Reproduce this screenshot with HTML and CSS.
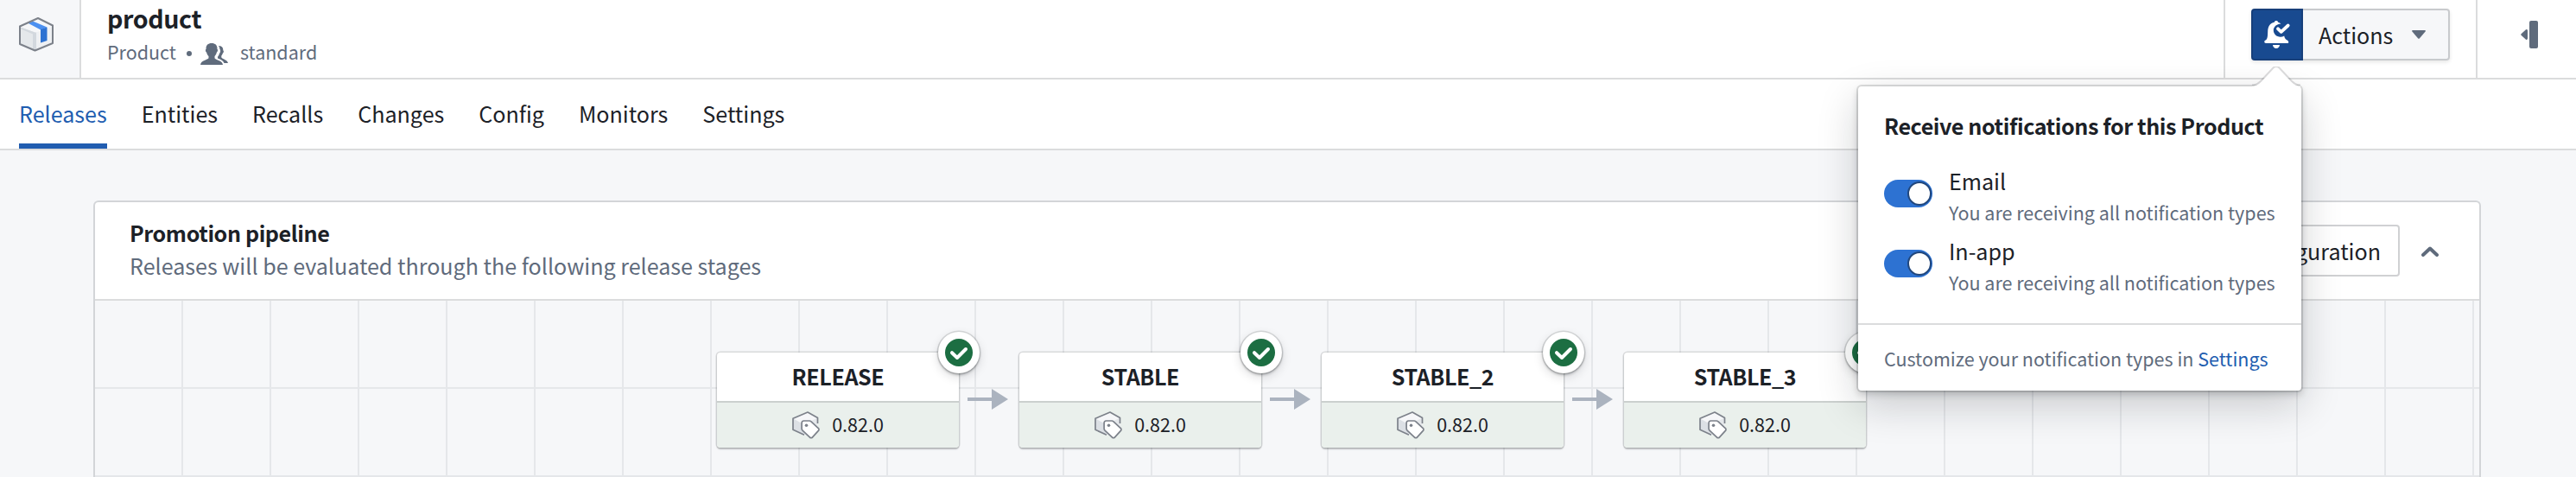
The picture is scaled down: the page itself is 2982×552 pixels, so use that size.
FILE: index.html
```html
<!DOCTYPE html>
<html lang="en">
<head>
    <meta charset="UTF-8">
    <meta name="viewport" content="width=device-width, initial-scale=1.0">
    <title>product</title>
    <link rel="stylesheet" href="styles.css">
</head>
<body>
    <svg class="sprite" width="0" height="0">
        <symbol id="tick" viewBox="0 0 32 32">
            <circle cx="16" cy="16" r="16" fill="#1c6e42"/>
            <path d="M8 16.200l6 5.800L24 12" fill="none" stroke="#fff" stroke-width="4" stroke-linecap="round" stroke-linejoin="round"/>
        </symbol>
        <symbol id="release" viewBox="0 0 32 32">
            <path d="M1 8.300L18 1l11.500 6.500V20L14 27.500 1 21.500z" fill="#f6f7f9"/>
            <path d="M1 8.300l12.500 7V27L1 21.500z" fill="#dce0e5"/>
            <path d="M13.500 15.300l16-7.800V20l-16 7z" fill="#e5e8eb"/>
            <path d="M14 27.200L1 21.300V8.300L18 1l11.500 6.500V14" fill="none" stroke="#7c818a" stroke-width="1.700" stroke-linejoin="round"/>
            <path d="M13.500 11h6.500a3 3 0 0 1 2 .8l8.300 7.700a2 2 0 0 1 .1 2.900l-7 7.700a2 2 0 0 1-2.900 0l-8.500-8a3 3 0 0 1-.900-2.100v-6.500A2.500 2.500 0 0 1 13.500 11z" fill="#fff" stroke="#7c818a" stroke-width="1.700"/>
            <circle cx="16.500" cy="16.200" r="1.800" fill="#7c818a"/>
        </symbol>
        <symbol id="arrow" viewBox="0 0 48 24">
            <path d="M0 10h28V0l19 12-19 12V14H0z" fill="#abb3bf"/>
        </symbol>
    </svg>

    <header class="header">
        <div class="header-icon">
            <svg width="40" height="40" viewBox="0 0 40 40">
                <path d="M1 10.500L22 1l17 8.500V30L18.500 38.500 1 31z" fill="#f6f7f9"/>
                <path d="M2 11.500l16.500 6V38L2 31z" fill="#e5e8eb"/>
                <path d="M2 11.500l16.500 6v3L2 13.500zM16 17.500h4.500V38H16z" fill="#d3d8de"/>
                <path d="M20 17.500L38 11v18.500L20 37.500z" fill="#eef0f3"/>
                <path d="M10.500 6.800L16 4.500l16.500 7-7.500 3z" fill="#4c90f0"/>
                <path d="M25 14l7.500-2.500V27L25 29.500z" fill="#2d72d2"/>
                <path d="M1 10.500L22 1l17 8.500V30L18.500 38.500 1 31z" fill="none" stroke="#7c818a" stroke-width="2" stroke-linejoin="round"/>
            </svg>
        </div>
        <div class="header-text">
            <h1>product</h1>
            <div class="meta">
                <span>Product</span>
                <span class="dot"></span>
                <svg width="32" height="26" viewBox="0 0 32 26">
                    <path d="M13 0c4.500 0 6.800 2.600 6.400 6.700 1 .4.800 3-.6 4-.5 2-1.300 3.400-2.300 4.300v2.300c.8 2 8.500 2.500 9.500 7.700H0c.6-5.200 8.500-5.700 9.500-7.700V15c-1-1-1.900-2.300-2.300-4.300-1.400-.8-1.700-3.500-.6-4C6.200 2.600 8.500 0 13 0z" fill="#5f6b7c"/>
                    <path d="M21 3c3.700-.2 5.600 2.300 5.200 5.300 1.300.6.700 2.700-.3 3.300-.4 1.500-1 2.400-1.600 3v1.800c.8 1.600 7 2.600 7.700 6.600h-4.500c-1.500-3.500-5-4.500-7.500-5.500v-1.800c1-1 1.600-2.300 2-3.800 1.500-1.600 1.500-4 .3-5.400.1-1.300-.4-2.500-1.300-3.500z" fill="#5f6b7c"/>
                </svg>
                <span class="space-name">standard</span>
            </div>
        </div>
        <div class="header-actions">
            <div class="button-group">
                <button class="bell-btn">
                    <svg width="34" height="32" viewBox="0 0 34 32">
                        <path d="M16 0c1.200 0 2 .6 2.200 1.700 1.300.3 2.400.9 3.300 1.800-5 .5-8.700 3.300-8.700 7.500 0 4.300 3.600 7.700 8 7.700 1.600 0 3-.4 4.400-1.200.3 1.800 1 3.300 2.500 4.500 2.300 1 3 2 2.300 4H4c-2 0-2.200-2.500-.8-3.200C6 21.300 6 18.500 6.200 12.500c.1-6 2.600-9.900 7.600-10.800C14 .6 14.800 0 16 0zM12 28h8c0 2.300-1.800 4-4 4s-4-1.700-4-4z" fill="#fff"/>
                        <path d="M18 9.300l3.700 3.500 8-7.300" fill="none" stroke="#fff" stroke-width="3.800" stroke-linecap="round" stroke-linejoin="round"/>
                    </svg>
                </button>
                <button class="actions-btn">
                    Actions
                    <svg width="16" height="10" viewBox="0 0 16 10"><path d="M1 0h14q1.500.3.600 1.600L9 9.300q-1 1-2 0L.4 1.600Q-.5.300 1 0z" fill="#5f6b7c"/></svg>
                </button>
            </div>
        </div>
        <div class="header-collapse">
            <svg width="20" height="32" viewBox="0 0 20 32">
                <rect x="10" width="10" height="32" rx="2" fill="#5f6b7c"/>
                <path d="M8 11.500v9q-.3 2-2 1.200L.8 17q-1.200-1 0-2L6 10.300q1.700-.8 2 1.200z" fill="#5f6b7c"/>
            </svg>
        </div>
    </header>

    <nav class="tabs">
        <a class="tab active">Releases</a>
        <a class="tab">Entities</a>
        <a class="tab">Recalls</a>
        <a class="tab">Changes</a>
        <a class="tab">Config</a>
        <a class="tab">Monitors</a>
        <a class="tab">Settings</a>
    </nav>

    <main class="card">
        <div class="card-header">
            <div class="card-text">
                <h2>Promotion pipeline</h2>
                <p>Releases will be evaluated through the following release stages</p>
            </div>
            <button class="config-btn">Configuration</button>
            <svg class="chevron" width="20" height="12" viewBox="0 0 20 12">
                <path d="M2 10l8-7.500L18 10" fill="none" stroke="#5f6b7c" stroke-width="4" stroke-linecap="round" stroke-linejoin="round"/>
            </svg>
        </div>
        <div class="canvas">
            <div class="stage">
                <h3>RELEASE</h3>
                <div class="version"><svg width="32" height="32"><use href="#release"/></svg><span>0.82.0</span></div>
                <div class="badge"><svg width="32" height="32"><use href="#tick"/></svg></div>
            </div>
            <svg class="arrow" width="48" height="24"><use href="#arrow"/></svg>
            <div class="stage">
                <h3>STABLE</h3>
                <div class="version"><svg width="32" height="32"><use href="#release"/></svg><span>0.82.0</span></div>
                <div class="badge"><svg width="32" height="32"><use href="#tick"/></svg></div>
            </div>
            <svg class="arrow" width="48" height="24"><use href="#arrow"/></svg>
            <div class="stage">
                <h3>STABLE_2</h3>
                <div class="version"><svg width="32" height="32"><use href="#release"/></svg><span>0.82.0</span></div>
                <div class="badge"><svg width="32" height="32"><use href="#tick"/></svg></div>
            </div>
            <svg class="arrow" width="48" height="24"><use href="#arrow"/></svg>
            <div class="stage">
                <h3>STABLE_3</h3>
                <div class="version"><svg width="32" height="32"><use href="#release"/></svg><span>0.82.0</span></div>
                <div class="badge"><svg width="32" height="32"><use href="#tick"/></svg></div>
            </div>
        </div>
    </main>

    <div class="popover">
        <svg class="popover-arrow" width="56" height="24" viewBox="0 0 56 24">
            <path d="M0 24v-1.500c5 0 7-1.500 10-4.500L24.500 2.500q3.500-3.500 7 0L46 18c3 3 5 4.500 10 4.500V24z" fill="#fff"/>
            <path d="M0 21.500c5 0 7-1.500 10-4.500L24.500 1.500q3.500-3 7 0L46 17c3 3 5 4.500 10 4.500" fill="none" stroke="#111418" stroke-opacity=".15" stroke-width="2"/>
        </svg>
        <div class="popover-body">
            <h4>Receive notifications for this Product</h4>
            <div class="option">
                <span class="toggle"></span>
                <div>
                    <div class="option-name">Email</div>
                    <div class="option-note">You are receiving all notification types</div>
                </div>
            </div>
            <div class="option">
                <span class="toggle"></span>
                <div>
                    <div class="option-name">In-app</div>
                    <div class="option-note">You are receiving all notification types</div>
                </div>
            </div>
        </div>
        <div class="popover-footer">Customize your notification types in <a>Settings</a></div>
    </div>
</body>
</html>
```
FILE: styles.css
```css
* {
    margin: 0;
    padding: 0;
    box-sizing: border-box;
}

body {
    position: relative;
    height: 552px;
    overflow: hidden;
    background: #f6f7f9;
    color: #1c2127;
    font-family: "Noto Sans CJK SC", "Noto Sans CJK JP", "Open Sans", sans-serif;
    font-size: 25.08px;
}

svg {
    display: block;
    flex-shrink: 0;
}

.sprite {
    position: absolute;
}

button {
    font: inherit;
    color: inherit;
    border: none;
    cursor: pointer;
}

h1, h2, h3, h4 {
    font-size: 25.08px;
    font-weight: 700;
    letter-spacing: -0.4px;
}

/* header */
.header {
    display: flex;
    height: 92px;
    background: #fff;
    border-bottom: 2px solid #dbdcdd;
}

.header-icon {
    width: 94px;
    padding: 20px 0 0 22px;
    background: #f6f7f9;
    border-right: 2px solid #dbdcdd;
}

.header-text {
    flex: 1;
    padding-left: 30px;
}

h1 {
    font-size: 28.6px;
    line-height: 41px;
}

.meta {
    display: flex;
    align-items: center;
    color: #5f6b7c;
    font-size: 21.5px;
    line-height: 38px;
}

.dot {
    width: 6px;
    height: 6px;
    margin: 4px 10px 0 12px;
    border-radius: 50%;
    background: #5f6b7c;
}

.meta svg {
    margin-top: 5px;
}

.space-name {
    margin-left: 14px;
}

.header-actions {
    width: 294px;
    padding: 10px 30px;
    border-left: 2px solid #dbdcdd;
    border-right: 2px solid #dbdcdd;
}

.button-group {
    display: flex;
    height: 60px;
    border-radius: 4px;
    box-shadow: 0 2px 4px rgba(17, 20, 24, 0.1);
}

.bell-btn {
    display: flex;
    align-items: center;
    justify-content: center;
    width: 60px;
    background: #184a90;
    border: 2px solid #173f7a;
    border-radius: 4px 0 0 4px;
}

.actions-btn {
    display: flex;
    flex: 1;
    align-items: center;
    justify-content: space-between;
    padding: 0 26px 0 18px;
    line-height: 54px;
    background: #f6f7f9;
    border: 2px solid #c8cacd;
    border-left: none;
    border-radius: 0 4px 4px 0;
}

.header-collapse {
    width: 114px;
    padding: 24px 0 0 50px;
}

/* tabs */
.tabs {
    display: flex;
    gap: 40px;
    height: 82px;
    padding-left: 22px;
    background: #fff;
    border-bottom: 2px solid #dbdcdd;
}

.tab {
    height: 80px;
    line-height: 78px;
}

.tab.active {
    color: #215db0;
    box-shadow: inset 0 -6px #215db0;
}

/* promotion pipeline */
.card {
    margin: 58px 110px 0 108px;
    background: #fff;
    border: 2px solid #d3d5d8;
    border-bottom: none;
    border-radius: 6px 6px 0 0;
}

.card-header {
    display: flex;
    align-items: center;
    height: 114px;
    padding: 0 47px 0 40px;
    border-bottom: 2px solid #dbdcdd;
}

.card-text {
    flex: 1;
    margin-top: -4px;
    line-height: 38px;
}

.card-text p {
    color: #5f6b7c;
}

.config-btn {
    height: 60px;
    padding: 0 20px;
    line-height: 54px;
    background: #fff;
    border: 2px solid #d0d1d3;
    border-radius: 4px;
}

.chevron {
    margin: 2px 0 0 25px;
}

.canvas {
    display: flex;
    align-items: flex-start;
    height: 204px;
    padding: 60px 0 0 720px;
    background:
        repeating-linear-gradient(90deg, transparent 0 100px, #e5e7ea 100px 102px),
        repeating-linear-gradient(180deg, transparent 0 100px, #e5e7ea 100px 102px),
        #f6f7f9;
}

.stage {
    position: relative;
    width: 280px;
    height: 110px;
    border-radius: 4px;
    background: #fff;
    box-shadow: 0 0 0 1.5px rgba(17, 20, 24, 0.13), 0 2px 2px rgba(17, 20, 24, 0.2);
}

h3 {
    height: 58px;
    line-height: 54px;
    text-align: center;
    border-bottom: 2px solid #cbd0ce;
}

.version {
    display: flex;
    align-items: center;
    justify-content: center;
    gap: 14px;
    height: 52px;
    font-size: 21.5px;
    background: #eaf0ec;
    border-radius: 0 0 4px 4px;
}

.version span {
    margin-top: -3px;
    line-height: 30px;
}

.badge {
    position: absolute;
    top: -24px;
    right: -24px;
    width: 48px;
    height: 48px;
    padding: 8px;
    border-radius: 50%;
    background: #fff;
    box-shadow: 0 0 0 1.5px rgba(17, 20, 24, 0.13), 0 2px 3px rgba(17, 20, 24, 0.25), 0 4px 12px rgba(17, 20, 24, 0.15);
}

.arrow {
    margin: 42px 12px 0 10px;
}

/* notification popover */
.popover {
    position: absolute;
    top: 100px;
    left: 2151px;
    width: 513px;
    background: #fff;
    border-radius: 4px;
    box-shadow: 0 0 0 2px rgba(17, 20, 24, 0.13), 0 4px 8px rgba(17, 20, 24, 0.2), 0 16px 48px rgba(17, 20, 24, 0.2);
}

.popover-arrow {
    position: absolute;
    top: -23px;
    right: 1px;
}

.popover-body {
    padding: 30px 30px 29px;
    border-bottom: 2px solid #dbdcdd;
}

h4 {
    margin-bottom: 30px;
    line-height: 30px;
    white-space: nowrap;
}

.option {
    display: flex;
    gap: 19px;
}

.option + .option {
    margin-top: 7px;
}

.toggle {
    flex-shrink: 0;
    width: 56px;
    height: 32px;
    margin-top: 18px;
    padding: 2px 1px 2px 27px;
    border-radius: 16px;
    background: #2d72d2;
}

.toggle::before {
    content: "";
    display: block;
    width: 24px;
    height: 24px;
    border: 2px solid #21477d;
    border-radius: 50%;
    background: #fff;
}

.option-name {
    line-height: 38px;
}

.option-note {
    color: #5f6b7c;
    font-size: 21.5px;
    line-height: 36px;
    white-space: nowrap;
}

.popover-footer {
    height: 76px;
    padding: 0 30px;
    color: #5f6b7c;
    font-size: 21.5px;
    line-height: 77px;
    white-space: nowrap;
}

.popover-footer a {
    color: #215db0;
}
```
